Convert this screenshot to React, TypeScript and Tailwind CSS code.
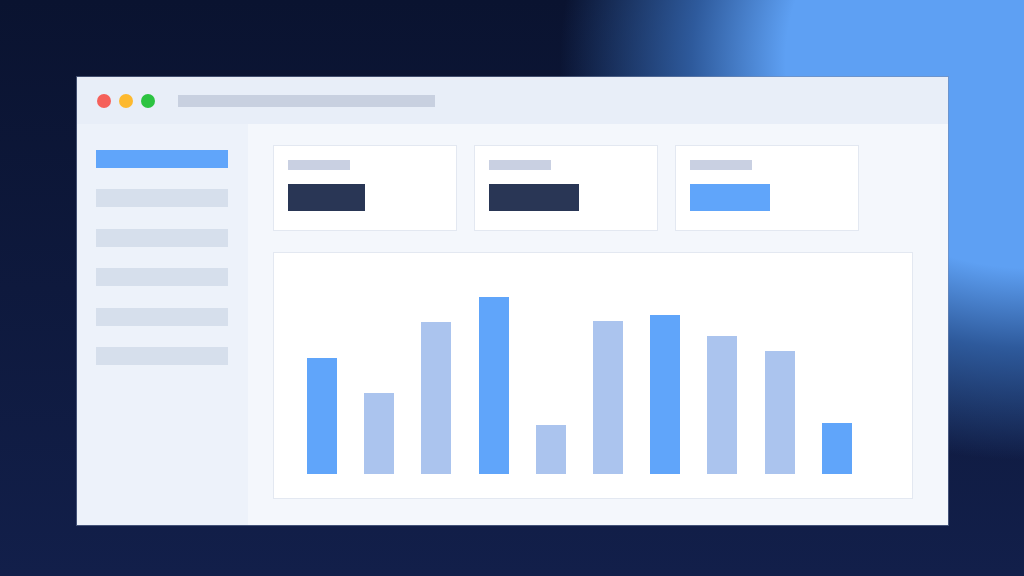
const bars = [
  { h: 116, strong: true },
  { h: 81, strong: false },
  { h: 152, strong: false },
  { h: 177, strong: true },
  { h: 49, strong: false },
  { h: 153, strong: false },
  { h: 159, strong: true },
  { h: 138, strong: false },
  { h: 123, strong: false },
  { h: 51, strong: true },
]

const stats = [
  { valueWidth: 'w-[77px]', valueColor: 'bg-[#293655]' },
  { valueWidth: 'w-[90px]', valueColor: 'bg-[#293655]' },
  { valueWidth: 'w-[80px]', valueColor: 'bg-[#60a5fa]' },
]

function StatCard({ valueWidth, valueColor }: { valueWidth: string; valueColor: string }) {
  return (
    <div className="w-[184px] h-[86px] bg-white border border-[#e3e8f1] pl-[14px] pt-[14px] flex flex-col gap-[14px]">
      <div className="w-[62px] h-[10px] bg-[#c9d0e2]" />
      <div className={`${valueWidth} h-[27px] ${valueColor}`} />
    </div>
  )
}

export default function App() {
  return (
    <div
      className="w-[1024px] h-[576px] overflow-hidden pt-[77px] pl-[77px] bg-[radial-gradient(ellipse_470px_400px_at_1030px_60px,#5ea0f3_0%,#5ea0f3_52%,#2e5a9c_72%,rgba(11,21,50,0)_100%),linear-gradient(to_bottom,#0a1330,#121f4a)]"
      style={{ fontFamily: 'Inter, "Liberation Sans", sans-serif' }}
    >
      <div className="w-[871px] h-[448px] flex flex-col shadow-[0_0_0_1px_rgba(120,135,170,0.5)]">
        {/* title bar */}
        <div className="h-[47px] bg-[#e8eef8] flex items-center pl-[20px]">
          <div className="flex gap-[8px]">
            <div className="w-[14px] h-[14px] rounded-full bg-[#f5605a]" />
            <div className="w-[14px] h-[14px] rounded-full bg-[#fdb92f]" />
            <div className="w-[14px] h-[14px] rounded-full bg-[#2cc341]" />
          </div>
          <div className="ml-[23px] w-[257px] h-[12px] bg-[#c8d0e0]" />
        </div>

        <div className="flex flex-1">
          {/* sidebar */}
          <div className="w-[171px] bg-[#edf2fa] pl-[19px] pt-[26px] flex flex-col gap-[21.4px]">
            <div className="w-[132px] h-[18px] bg-[#60a5fa]" />
            <div className="w-[132px] h-[18px] bg-[#d6dfec]" />
            <div className="w-[132px] h-[18px] bg-[#d6dfec]" />
            <div className="w-[132px] h-[18px] bg-[#d6dfec]" />
            <div className="w-[132px] h-[18px] bg-[#d6dfec]" />
            <div className="w-[132px] h-[18px] bg-[#d6dfec]" />
          </div>

          {/* main */}
          <div className="flex-1 bg-[#f4f7fc] pt-[21px] pl-[25px] pr-[35px] pb-[26px] flex flex-col gap-[21px]">
            <div className="flex gap-[17px]">
              {stats.map((s, i) => (
                <StatCard key={i} valueWidth={s.valueWidth} valueColor={s.valueColor} />
              ))}
            </div>
            <div className="flex-1 bg-white border border-[#e3e8f1] flex items-end gap-[27.2px] pl-[33px] pb-[24px]">
              {bars.map((b, i) => (
                <div
                  key={i}
                  className={`w-[30px] ${b.strong ? 'bg-[#60a5fa]' : 'bg-[#abc4ee]'}`}
                  style={{ height: b.h }}
                />
              ))}
            </div>
          </div>
        </div>
      </div>
    </div>
  )
}
